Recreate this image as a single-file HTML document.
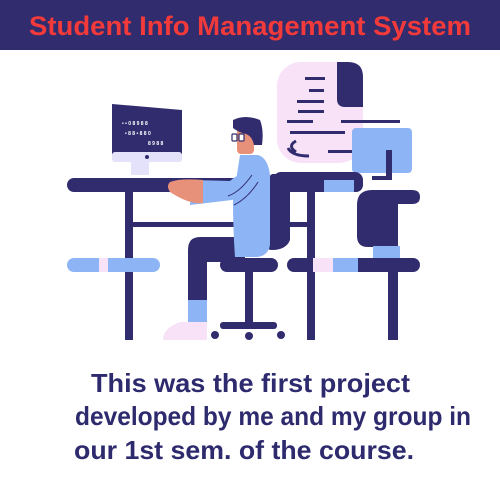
<!DOCTYPE html>
<html><head><style>
html,body{margin:0;padding:0;background:#fff;width:500px;height:500px;overflow:hidden}
svg{display:block}
text{font-family:"Liberation Sans",sans-serif;font-weight:bold}
</style></head><body>
<svg width="500" height="500" viewBox="0 0 500 500">
<rect x="0" y="0" width="500" height="50" fill="#312c6e"/>
<text x="29" y="35" font-size="27" fill="#f23a3a" textLength="442" lengthAdjust="spacingAndGlyphs">Student Info Management System</text>

<!-- document blob -->
<rect x="277" y="62" width="86" height="101" rx="24" fill="#f7e2f8"/>
<path d="M337 62 H348 Q363 62 363 77 V107 H345 Q337 107 337 99 Z" fill="#312c6e"/>
<g fill="#312c6e">
<rect x="305" y="77" width="20" height="3"/>
<rect x="309" y="89" width="15" height="3"/>
<rect x="297" y="100" width="27" height="3"/>
<rect x="298" y="110" width="26" height="3"/>
<rect x="287" y="120" width="26" height="3"/>
<rect x="341" y="120" width="59" height="3"/>
<rect x="290" y="131" width="55" height="3"/>
<rect x="328" y="150" width="30" height="3"/>
</g>
<path d="M296 141 Q287 146 296 152 M288 148 Q292 156 309 156" stroke="#312c6e" stroke-width="3" fill="none"/>
<!-- blue monitor -->
<rect x="352" y="128" width="60" height="45" rx="4" fill="#8db4f5"/>
<rect x="386" y="150" width="6" height="30" fill="#312c6e"/>
<rect x="372" y="176" width="20" height="4" fill="#312c6e"/>

<!-- left monitor -->
<path d="M112 104 L182 110 V155 H112 Z" fill="#312c6e"/>
<rect x="112" y="152" width="70" height="10" rx="3" fill="#e4e2fb"/>
<rect x="131" y="162" width="18" height="13" fill="#e4e2fb"/>
<circle cx="147" cy="157" r="2" fill="#312c6e"/>
<g fill="#fff" font-size="5">
<text x="122" y="125" fill="#fff" font-size="5">• • 0 8 9 8 8</text>
<text x="125" y="135" fill="#fff" font-size="5">• 8 8 • 8 8 0</text>
<text x="148" y="145" fill="#fff" font-size="5">8 9 8 8</text>
</g>

<!-- desk -->
<rect x="67" y="178" width="296" height="14" rx="7" fill="#312c6e"/>
<rect x="125" y="190" width="8" height="150" fill="#312c6e"/>
<rect x="307" y="190" width="8" height="150" fill="#312c6e"/>
<rect x="131" y="222" width="178" height="5" fill="#312c6e"/>
<!-- armrest bar -->
<rect x="273" y="172" width="90" height="20" rx="8" fill="#312c6e"/>
<rect x="324" y="180" width="30" height="12" fill="#8db4f5"/>

<!-- benches -->
<rect x="67" y="258" width="93" height="14" rx="7" fill="#8db4f5"/>
<rect x="99" y="258" width="9" height="14" fill="#f7e2f8"/>
<rect x="287" y="258" width="133" height="14" rx="7" fill="#312c6e"/>
<rect x="313" y="258" width="20" height="14" fill="#f7e2f8"/>
<rect x="333" y="258" width="25" height="14" fill="#8db4f5"/>
<rect x="388" y="270" width="10" height="70" fill="#312c6e"/>
<!-- right chair back -->
<path d="M360 190 H412 Q420 190 420 197 Q420 204 412 204 H398 V247 H368 Q357 247 357 236 V205 Q357 190 372 190 Z" fill="#312c6e"/>
<rect x="373" y="246" width="27" height="12" fill="#8db4f5"/>

<!-- person chair back -->
<path d="M272 174 H290 V240 Q286 250 272 250 Q265 250 265 240 V180 Z" fill="#312c6e"/>
<!-- person legs -->
<path d="M245 237 H200 Q188 237 188 250 V303 H207 V262 H245 Z" fill="#312c6e"/>
<rect x="188" y="300" width="19" height="23" fill="#8db4f5"/>
<path d="M207 322 V340 H163 Q163 328 180 322 Z" fill="#f7e2f8"/>
<!-- torso -->
<path d="M240 155 H258 Q268 158 270 175 V245 Q268 257 255 257 H235 Q233 230 233 200 Z" fill="#8db4f5"/>
<!-- arm -->
<path d="M255 170 Q250 195 232 200 L190 205 L192 180 L230 181 Q240 172 255 170 Z" fill="#8db4f5"/>
<path d="M252 175 Q240 192 228 196 M258 182 Q248 198 234 205" stroke="#312c6e" stroke-width="1" fill="none"/>
<path d="M170 182 Q180 178 203 180 L203 203 Q190 205 170 192 Q166 186 170 182 Z" fill="#e8917a"/>
<!-- head -->
<rect x="237" y="128" width="17" height="26" rx="4" fill="#e8917a"/>
<path d="M233 120 Q245 114 260 120 Q264 130 262 145 H254 Q252 136 246 134 Q238 132 233 128 Z" fill="#312c6e"/>
<rect x="232" y="134" width="5" height="7" rx="1" fill="#fff" stroke="#312c6e" stroke-width="1.2"/>
<rect x="239" y="134" width="5" height="7" rx="1" fill="#fff" stroke="#312c6e" stroke-width="1.2"/>
<!-- seat -->
<rect x="220" y="258" width="58" height="14" rx="7" fill="#312c6e"/>
<rect x="245" y="270" width="8" height="55" fill="#312c6e"/>
<rect x="220" y="322" width="57" height="7" rx="3" fill="#312c6e"/>
<circle cx="215" cy="335" r="4" fill="#312c6e"/>
<circle cx="249" cy="336" r="4" fill="#312c6e"/>
<circle cx="281" cy="335" r="4" fill="#312c6e"/>

<g fill="#2e2a6e" font-size="26">
<text x="91" y="392" textLength="319" lengthAdjust="spacingAndGlyphs">This was the first project</text>
<text x="75" y="425" textLength="396" lengthAdjust="spacingAndGlyphs">developed by me and my group in</text>
<text x="74" y="459" textLength="340" lengthAdjust="spacingAndGlyphs">our 1st sem. of the course.</text>
</g>
</svg>
</body></html>
